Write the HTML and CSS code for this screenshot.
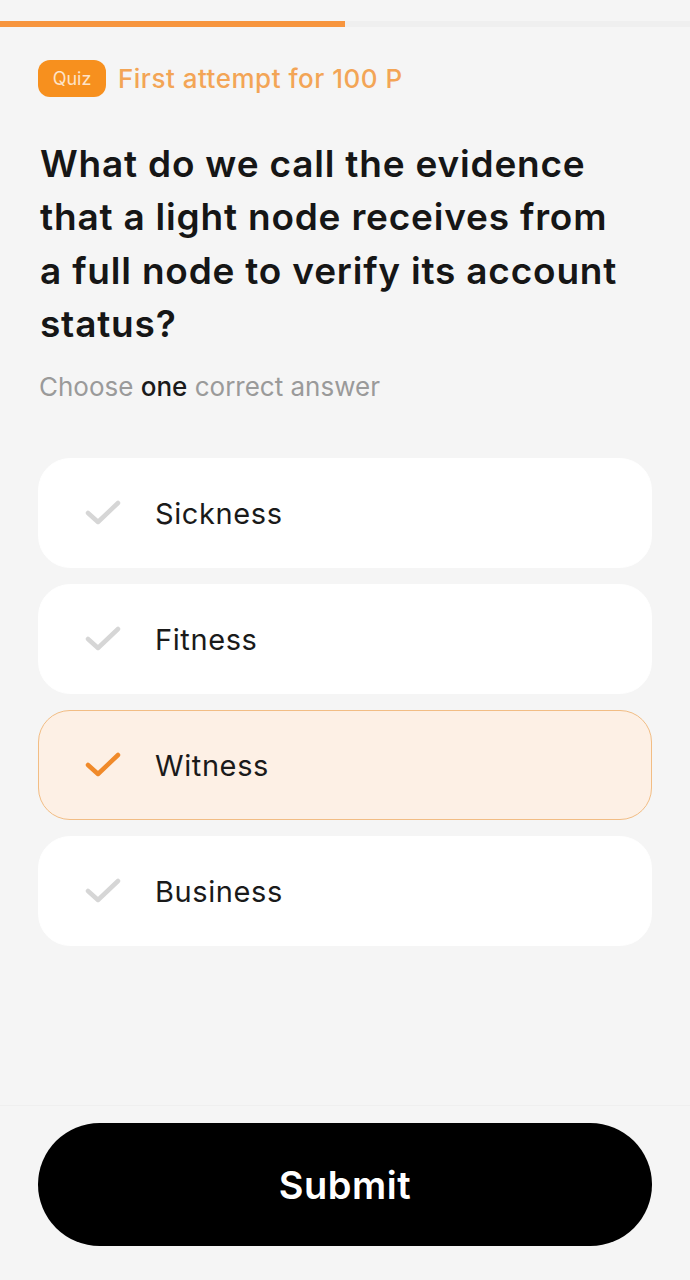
FILE: index.html
```html
<!DOCTYPE html>
<html>
<head>
<meta charset="utf-8">
<link rel="stylesheet" href="styles.css">
</head>
<body>
<div class="page">
  <div class="progress"><div class="progress-fill"></div></div>
  <main class="content">
    <div class="meta">
      <span class="badge">Quiz</span>
      <span class="reward">First attempt for 100 P</span>
    </div>
    <h1 class="question">What do we call the evidence that a light node receives from a full node to verify its account status?</h1>
    <p class="hint">Choose <b>one</b> correct answer</p>
    <div class="options">
      <div class="option">
        <svg class="check" viewBox="0 0 36 28"><path d="M3 14 L13 23 L33 4" /></svg>
        <span class="label">Sickness</span>
      </div>
      <div class="option">
        <svg class="check" viewBox="0 0 36 28"><path d="M3 14 L13 23 L33 4" /></svg>
        <span class="label">Fitness</span>
      </div>
      <div class="option selected">
        <svg class="check" viewBox="0 0 36 28"><path d="M3 14 L13 23 L33 4" /></svg>
        <span class="label">Witness</span>
      </div>
      <div class="option">
        <svg class="check" viewBox="0 0 36 28"><path d="M3 14 L13 23 L33 4" /></svg>
        <span class="label">Business</span>
      </div>
    </div>
  </main>
  <footer class="footer">
    <button class="submit">Submit</button>
  </footer>
</div>
</body>
</html>
```

FILE: styles.css
```css
* { box-sizing: border-box; }
html, body {
  margin: 0;
  padding: 0;
  background: #f5f5f5;
  font-family: Inter, "Noto Sans", sans-serif;
}
.page {
  height: 1280px;
  display: flex;
  flex-direction: column;
}
.progress {
  margin-top: 21px;
  height: 6px;
  background: #efefef;
}
.progress-fill {
  width: 345px;
  height: 6px;
  background: #f7953e;
}
.content {
  flex: 1;
  padding: 33px 38px 0;
}
.meta {
  display: flex;
  align-items: center;
  gap: 12px;
  height: 37px;
}
.badge {
  background: #f7901e;
  color: #fde3c8;
  font-size: 18px;
  line-height: 37px;
  height: 37px;
  width: 68px;
  text-align: center;
  border-radius: 12px;
}
.reward {
  color: #f3a556;
  font-size: 26px;
  font-weight: 500;
  letter-spacing: 0.5px;
}
.question {
  margin: 40px 0 0 2px;
  max-width: 585px;
  font-size: 37px;
  line-height: 53.3px;
  font-weight: 600;
  color: #161616;
  letter-spacing: 0.8px;
}
.hint {
  margin: 21px 0 0 1px;
  font-size: 26px;
  color: #9a9a9a;
}
.hint b {
  font-weight: 500;
  color: #1a1a1a;
}
.options {
  margin-top: 56px;
  display: flex;
  flex-direction: column;
  gap: 16px;
}
.option {
  height: 110px;
  background: #ffffff;
  border: 1px solid #ffffff;
  border-radius: 32px;
  display: flex;
  align-items: center;
  padding-left: 46px;
}
.option.selected {
  background: #fdf0e5;
  border-color: #f2bd84;
}
.check {
  width: 36px;
  height: 28px;
  fill: none;
  stroke: #d6d6d6;
  stroke-width: 4.5;
  stroke-linecap: round;
  stroke-linejoin: round;
}
.selected .check { stroke: #f08a2a; }
.label {
  margin-left: 34px;
  font-size: 29px;
  color: #1a1a1a;
  letter-spacing: 0.6px;
}
.footer {
  border-top: 1px solid #efefef;
  padding: 17px 38px 34px;
}
.submit {
  width: 100%;
  height: 123px;
  border: none;
  border-radius: 62px;
  background: #000;
  color: #fff;
  font-family: Inter, "Noto Sans", sans-serif;
  font-size: 38px;
  font-weight: 600;
  letter-spacing: 0.5px;
}
```
